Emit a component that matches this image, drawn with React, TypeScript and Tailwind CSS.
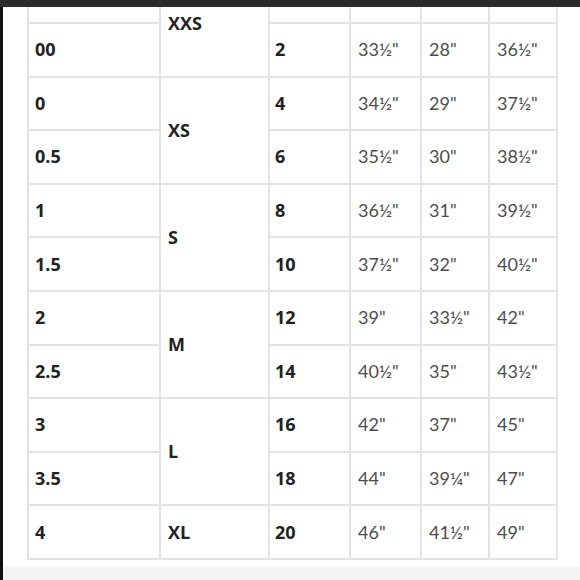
import React from "react";

type Row = { us: string; size?: string; span?: boolean; num: string; a: string; b: string; c: string };

const rows: Row[] = [
  { us: "", size: "XXS", span: true, num: "", a: "", b: "", c: "" },
  { us: "00", num: "2", a: "33½\"", b: "28\"", c: "36½\"" },
  { us: "0", size: "XS", span: true, num: "4", a: "34½\"", b: "29\"", c: "37½\"" },
  { us: "0.5", num: "6", a: "35½\"", b: "30\"", c: "38½\"" },
  { us: "1", size: "S", span: true, num: "8", a: "36½\"", b: "31\"", c: "39½\"" },
  { us: "1.5", num: "10", a: "37½\"", b: "32\"", c: "40½\"" },
  { us: "2", size: "M", span: true, num: "12", a: "39\"", b: "33½\"", c: "42\"" },
  { us: "2.5", num: "14", a: "40½\"", b: "35\"", c: "43½\"" },
  { us: "3", size: "L", span: true, num: "16", a: "42\"", b: "37\"", c: "45\"" },
  { us: "3.5", num: "18", a: "44\"", b: "39¼\"", c: "47\"" },
  { us: "4", size: "XL", num: "20", a: "46\"", b: "41½\"", c: "49\"" },
];

const bold = "bg-white flex items-center text-[18px] font-bold text-[#222] font-['Open_Sans',sans-serif]";
const light = "bg-white flex items-center pl-[7px] text-[18px] font-normal text-[#4d4d4d] font-['Lato',sans-serif]";

export default function App() {
  return (
    <div className="w-[580px] h-[580px] bg-white flex flex-col overflow-hidden">
      <div className="h-[7px] bg-[#2b2b2b] shrink-0" />
      <div className="flex flex-1 min-h-0">
        <div className="w-[3px] bg-[#111] shrink-0" />
        <div className="flex flex-col flex-1 min-w-0">
          <div className="h-[560px] overflow-hidden shrink-0">
            <div className="ml-[24px] mt-[-38.6px] w-fit bg-[#e3e3e3] p-[2px] grid grid-cols-[130px_107px_79px_69px_66px_66px] grid-rows-[repeat(11,51.6px)] gap-[2px]">
              {rows.map((r, i) => (
                <React.Fragment key={i}>
                  <div className={`${bold} pl-[6px]`}>{r.us}</div>
                  {r.size !== undefined && (
                    <div className={`${bold} pl-[7px] ${r.span ? "row-span-2" : ""}`}>{r.size}</div>
                  )}
                  <div className={`${bold} pl-[5px]`}>{r.num}</div>
                  <div className={light}>{r.a}</div>
                  <div className={light}>{r.b}</div>
                  <div className={light}>{r.c}</div>
                </React.Fragment>
              ))}
            </div>
          </div>
          <div className="flex-1 bg-[#f3f3f3]" />
        </div>
      </div>
    </div>
  );
}
